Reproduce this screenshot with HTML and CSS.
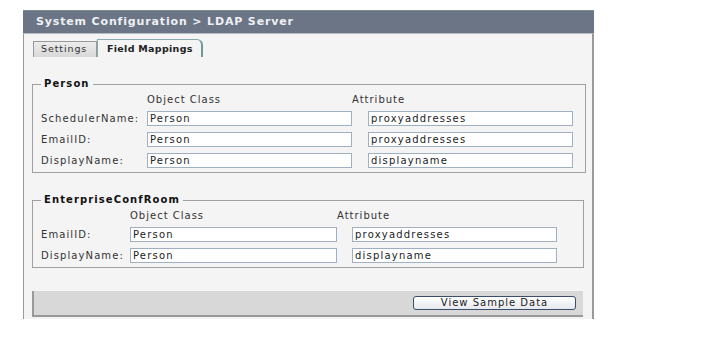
FILE: index.html
```html
<!DOCTYPE html>
<html lang="en">
<head>
    <meta charset="UTF-8">
    <title>LDAP Server</title>
    <link rel="stylesheet" href="styles.css">
</head>
<body>
    <div class="panel">
        <div class="panel-title">System Configuration &gt; LDAP Server</div>
        <div class="panel-body">
            <div class="tabs">
                <span class="tab">Settings</span>
                <span class="tab tab-active">Field Mappings</span>
            </div>

            <fieldset class="group group-person">
                <legend>Person</legend>
                <div class="grid">
                    <span></span>
                    <span class="col-head">Object Class</span>
                    <span class="col-head">Attribute</span>

                    <label>SchedulerName:</label>
                    <input type="text" value="Person">
                    <input type="text" value="proxyaddresses">

                    <label>EmailID:</label>
                    <input type="text" value="Person">
                    <input type="text" value="proxyaddresses">

                    <label>DisplayName:</label>
                    <input type="text" value="Person">
                    <input type="text" value="displayname">
                </div>
            </fieldset>

            <fieldset class="group group-room">
                <legend>EnterpriseConfRoom</legend>
                <div class="grid">
                    <span></span>
                    <span class="col-head">Object Class</span>
                    <span class="col-head">Attribute</span>

                    <label>EmailID:</label>
                    <input type="text" value="Person">
                    <input type="text" value="proxyaddresses">

                    <label>DisplayName:</label>
                    <input type="text" value="Person">
                    <input type="text" value="displayname">
                </div>
            </fieldset>

            <div class="actions">
                <button type="button">View Sample Data</button>
            </div>
        </div>
    </div>
</body>
</html>
```

FILE: styles.css
```css
body {
    background-color: #fff;
    margin: 0;
    font-family: "DejaVu Sans", Verdana, sans-serif;
    font-size: 10px;
    color: #333;
}
.panel {
    width: 571px;
    margin: 10px 0 0 23px;
}
.panel-title {
    height: 22px;
    line-height: 22px;
    padding-left: 13px;
    background-color: #6b7586;
    border-top: 1px solid #7f8c8c;
    color: #eef0f4;
    font-weight: bold;
    font-size: 11px;
    letter-spacing: 0.85px;
}
.panel-body {
    background-color: #f4f4f4;
    border-left: 1px solid #999;
    border-right: 2px solid #999;
    border-top: 1px solid #b8bcc4;
    padding: 5px 8px 2px 8px;
}
.tabs {
    display: flex;
    align-items: flex-end;
    margin-left: 1px;
    height: 18px;
}
.tab {
    box-sizing: border-box;
    height: 16px;
    line-height: 14px;
    padding: 0 0 0 7px;
    width: 64px;
    white-space: nowrap;
    background: linear-gradient(#ececec, #d8d8d8);
    border: 1px solid #999;
    border-bottom: none;
    color: #333;
    font-size: 9.5px;
    letter-spacing: 0.9px;
}
.tab-active {
    height: 18px;
    line-height: 17px;
    width: 106px;
    padding-left: 9px;
    background: #f4f4f4;
    border: 1px solid #8aa;
    border-right: 2px solid #6a9a9a;
    border-top-right-radius: 6px;
    border-bottom: none;
    color: #222;
    font-weight: bold;
    font-size: 9.5px;
    letter-spacing: 0.3px;
}
.group {
    margin: 21px 0 0 0;
    padding: 4px 0 4px 8px;
    border: 1px solid #a0a0a0;
}
.group legend {
    margin-left: 0;
    padding: 0 3px;
    line-height: 12px;
    font-weight: bold;
    color: #111;
    letter-spacing: 1.1px;
}
.group-person {
    width: 544px;
}
.group-room {
    width: 542px;
}
.grid {
    display: grid;
    row-gap: 6px;
    grid-template-rows: 11px;
    grid-auto-rows: 15px;
    align-items: center;
}
.group-person .grid {
    grid-template-columns: 106px 205px 205px;
    column-gap: 0;
}
.group-person .grid input:nth-child(3n) {
    margin-left: 16px;
}
.group-room .grid {
    grid-template-columns: 89px 207px 205px;
}
.group-room .grid input:nth-child(3n) {
    margin-left: 15px;
}
.col-head {
    line-height: 11px;
    color: #333;
    letter-spacing: 1px;
}
.grid label {
    color: #333;
    letter-spacing: 1.1px;
}
.grid input {
    box-sizing: border-box;
    height: 15px;
    width: 205px;
    padding: 0 2px;
    border: 1px solid #9fb0c2;
    background-color: #fff;
    font-family: "DejaVu Sans", Verdana, sans-serif;
    font-size: 10px;
    color: #222;
    letter-spacing: 1.2px;
}
.group-room .grid input:nth-child(3n+2) {
    width: 207px;
}
.actions {
    margin-top: 23px;
    width: 549px;
    height: 24px;
    background-color: #d8d8d8;
    border-left: 2px solid #999;
    border-bottom: 2px solid #999;
    display: flex;
    align-items: center;
    justify-content: flex-end;
}
.actions button {
    width: 163px;
    height: 14px;
    margin-right: 7px;
    padding: 0;
    border: 1px solid #3c4d6e;
    border-radius: 3px;
    background: linear-gradient(#ffffff, #e6e8ee);
    font-family: "DejaVu Sans", Verdana, sans-serif;
    font-size: 10px;
    line-height: 12px;
    color: #222;
    letter-spacing: 1px;
}
```
